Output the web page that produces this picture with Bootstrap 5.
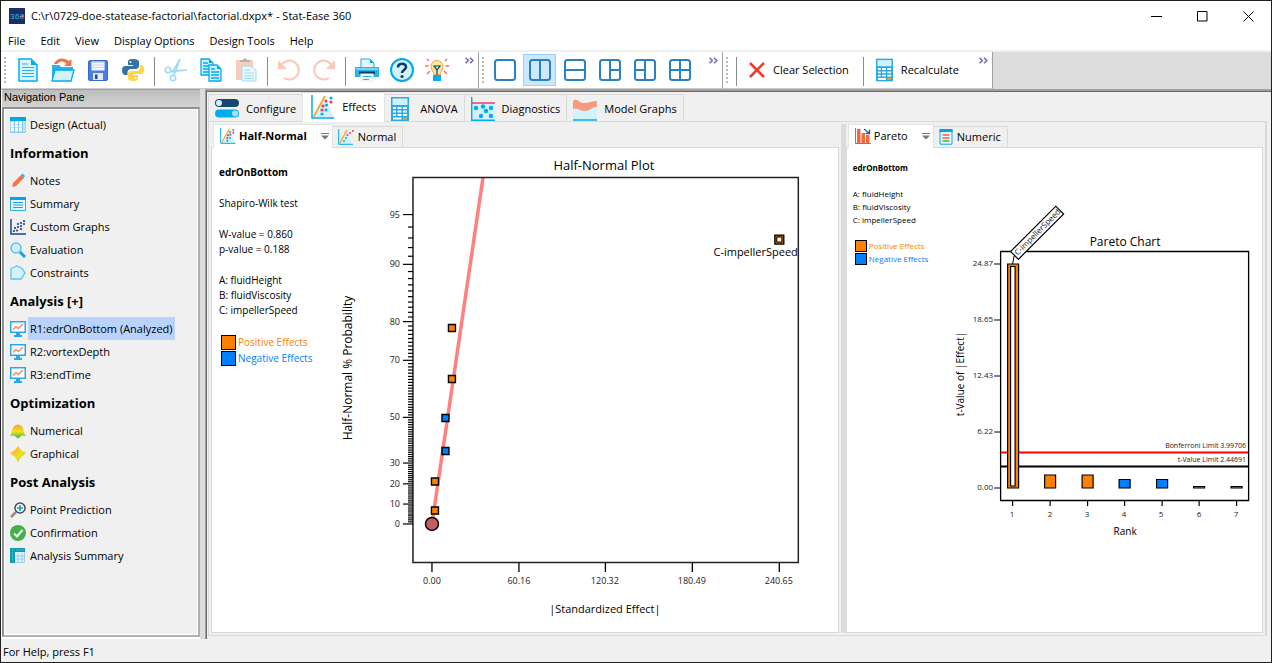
<!DOCTYPE html>
<html lang="en">
<head>
<meta charset="utf-8">
<meta name="viewport" content="width=device-width, initial-scale=1">
<title>Stat-Ease 360</title>
<link href="https://cdn.jsdelivr.net/npm/bootstrap@5.3.0/dist/css/bootstrap.min.css" rel="stylesheet">
<style>
:root{--face:#f0f0f0;--edge:#d9d9d9;--ink:#000}
body{font:11px/16px "Open Sans","Noto Sans",sans-serif;color:var(--ink);background:#fff}
button{font:inherit;color:inherit;background:none;border:0;padding:0}
svg{display:block;flex:none}
.app{height:100vh;border:1px solid #202020}
.titlebar{height:30px;padding-left:8px}
.doc{padding-left:6px}
.winbtn{width:46px;height:30px;display:grid;place-items:center}
.menubar{height:19px;border-bottom:2px solid var(--face);box-sizing:content-box}
.menubar button{padding:0 8px 0 7px;height:19px}
.bars{height:37px;background:#dcdcdc}
.bar{background:#fff;border-right:1px solid #a0a0a0;border-bottom:1px solid #ccc}
.filebar{width:478px}
.viewbar{width:244px}
.runbar{width:270px}
.grip{width:2px;margin:5px 3px 3px 3px;background:repeating-linear-gradient(#bbb 0 2px,#fff 2px 4px)}
.filebar .grip,.runbar .grip{margin-right:4px}
.sep{width:8px;padding:5px 3px 3px 4px}
.sep::before{content:"";width:1px;height:29px;display:block;background:#8c8c8c}
.tool{width:35px;display:grid;place-items:center}
.tool.picked{background:#cce8ff;box-shadow:inset 0 0 0 1px #99d1ff;margin:2px 1px;width:33px;height:32px}
.cmd{display:flex;align-items:center;gap:8px;padding:0 10px 0 9px}
.off{opacity:.45}
.chev{padding:5px 0 0;align-self:flex-start}
.navpane{width:199px;flex:none;padding-left:1px}
.navhead{font:11px/14px "Liberation Sans",Arial,sans-serif;height:18px;padding:0 2px;background:linear-gradient(#bdbdbd,#d4d4d4);border-top:1px solid #a0a0a0}
.navbox{border:2px solid #909090;border-right-color:#b0b0b0;border-bottom-color:#b0b0b0;outline:1px solid #fff;outline-offset:-3px;background:var(--face);padding:4px 0 0 6px;margin-bottom:2px;overflow:hidden}
.navbox h2{font-size:13px;font-weight:700;line-height:31px;padding-top:2px;margin:0}
.navbox a{display:flex;align-items:center;height:23px;color:#000;text-decoration:none}
.navbox a span{padding:0 2px;line-height:23px;margin-left:2px}
.navbox a.on span{background:#b9d3fd}
.split{width:5px;flex:none;background:#dcdcdc}
.work{background:var(--face);border-left:1px solid #a0a0a0;border-top:2px solid #a0a0a0;box-shadow:inset 1px 1px #696969;padding:1px 4px 3px 2px;min-width:0}
.tabs{display:flex;align-items:flex-end;position:relative;z-index:1}
.tab{display:flex;align-items:center;border:1px solid var(--edge);border-bottom:0;background:var(--face);margin-right:-1px;white-space:nowrap}
.tab.on{background:#fff;border-color:#e4e4e4;margin-bottom:-1px;z-index:2}
.maintabs{height:29px}
.maintabs .tab{height:27px;padding:1px 6px 0;gap:7px}
.maintabs .tab.on{height:30px;padding:0 8px 2px}
.subtabs{height:23px;padding-left:2px}
.subtabs .tab{height:21px;padding:0 6px 0 5px;gap:4px}
.subtabs .tab.on{height:24px;padding:0 3px 1px 6px;gap:3px}
.subtabs .tab.on svg:last-child{margin-left:11px}
.pageborder{border:1px solid var(--edge);border-right-width:2px;padding:2px}
.gutter{margin-left:2px}
.leftpane{flex:629 1 0;min-width:0}
.rightpane{flex:418 1 0;min-width:0}
.fill{min-height:0}
.plotpage{border:1px solid var(--edge);background:#fff}
.key{padding:17px 0 0 7px;flex:none;font-size:10px;line-height:15px}
.key p{margin:0 0 16px}
.key .sw{display:flex;align-items:center;height:16px;gap:2px;white-space:nowrap}
.key .sw::before{content:"";width:15px;height:15px;border:1px solid #000;margin-left:2px}
.key .pos{color:#ff8000}.key .neg{color:#0080ff}
.key .pos::before{background:#ff8000}.key .neg::before{background:#0080ff}
.wide{width:120px}
.slim{width:90px;padding:13px 0 0 6px;font-size:8px;line-height:13px}
.slim p{margin-bottom:13px}
.slim .sw{height:13px}
.slim .sw::before{width:12px;height:12px}
.plot{flex:1 1 0;min-width:0;height:100%}
.plot text{font-family:"Open Sans","Noto Sans",sans-serif}
.t7{font-size:7px;fill:#222}.t8{font-size:8px;fill:#222}.t9{font-size:9px;fill:#222}
.t10{font-size:10px}.t11{font-size:11px}.t12{font-size:12px}.t13{font-size:13px}
.statusbar{height:23px;background:var(--face);padding:5px 2px 2px}
</style>
</head>
<body>
<svg width="0" height="0" class="position-absolute" aria-hidden="true">
<symbol id="monitor" viewBox="0 0 16 16"><path d="M0 0h16v12H0z" fill="#29abe2"/><path d="M1.500 1.500h13v9h-13z" fill="#fff"/><path d="M3 8.500 6 5.500 8.500 7.500 13 3" fill="none" stroke="#f68b6b" stroke-width="1.500"/><path d="M6 12h4v2h2v2H4v-2h2z" fill="#29abe2"/></symbol>
<symbol id="chevrons" viewBox="0 0 8 6"><path d="M.5.5 3 3 .5 5.500M4.500.5 7 3 4.500 5.500" fill="none" stroke="#6c6ca8" stroke-width="1.300"/></symbol>
<symbol id="calc" viewBox="0 0 18 24"><path d="M0 0h18v24H0z" fill="#29abe2"/><path d="M1.500 1.500h15V8h-15z" fill="#d3f2fc"/><path d="M2 10h3v2H2zm4.500 0h4v2h-4zM12 10h4v2h-4zM2 13.500h3v2H2zm4.500 0h4v2h-4zm5.500 0h4v2h-4zM2 17h3v2H2zm4.500 0h4v2h-4zm5.500 0h4v2h-4zM2 20.500h8.500v2H2z" fill="#fff"/><path d="M12 20.500h4v2h-4z" fill="#f9a11b"/></symbol>
<symbol id="effects" viewBox="0 0 24 24"><path d="M1 23 14 1l9 22z" fill="#d3f2fc"/><path d="M1 0v23h22" fill="none" stroke="#00aeef" stroke-width="1.500"/><path d="M2.500 22 14 1" stroke="#f9a62b" stroke-width="1.800"/><g fill="#ef4056"><circle cx="20" cy="7" r="1.600"/><circle cx="15" cy="6" r="1.500"/><circle cx="12" cy="11" r="1.600"/><circle cx="11" cy="15" r="1.600"/></g><g fill="#00aeef"><circle cx="20" cy="3" r="1.600"/><circle cx="15.500" cy="10" r="1.600"/><circle cx="11" cy="19" r="1.600"/><circle cx="15" cy="15" r="1.500"/></g></symbol>
<symbol id="drop" viewBox="0 0 8 7"><path d="M0 .5h8" stroke="#777"/><path d="M0 2.500h8L4 6.500z" fill="#777"/></symbol>
</svg>
<div class="app d-flex flex-column">
  <header>
    <div class="titlebar d-flex align-items-center">
      <svg width="16" height="16" viewBox="0 0 16 16"><path d="M0 0h16v16H0z" fill="#1c2f63"/><text x="1" y="11" font-size="8" font-family="Liberation Mono" fill="#29b6f6">360</text><path d="M11 9l4-1-2-1" stroke="#f47b30" fill="none"/></svg>
      <span class="doc flex-grow-1">C:\r\0729-doe-statease-factorial\factorial.dxpx* - Stat-Ease 360</span>
      <button class="winbtn" aria-label="Minimize"><svg width="11" height="11"><path d="M0 5.500h11" stroke="#000"/></svg></button>
      <button class="winbtn" aria-label="Maximize"><svg width="11" height="11"><path d="M.5.500h9.500v9.500H.5z" fill="none" stroke="#000"/></svg></button>
      <button class="winbtn" aria-label="Close"><svg width="11" height="11"><path d="M.5.500l10 10M10.500.5l-10 10" stroke="#000"/></svg></button>
    </div>
    <nav class="menubar d-flex"><button>File</button><button>Edit</button><button>View</button><button>Display Options</button><button>Design Tools</button><button>Help</button></nav>
    <div class="bars d-flex">
      <div class="bar filebar d-flex">
        <span class="grip"></span>
        <button class="tool" aria-label="New"><svg width="20" height="24" viewBox="0 0 20 24"><path d="M1 1h12l6 6v16H1z" fill="#d9f4fd" stroke="#00aeef" stroke-width="1.500"/><path d="M13 1v6h6z" fill="#00aeef"/><path d="M4 6h6M4 9.500h12M4 12.500h12M4 15.500h12M4 18.500h12" stroke="#29b3e8"/></svg></button>
        <button class="tool" aria-label="Open"><svg width="24" height="24" viewBox="0 0 24 24"><path d="M1 22V7h7l2 2h12v5" fill="#29b3e8"/><path d="M3 6C5 0 13-1.500 18 3l2.500-2v7h-7.500l2.500-2.300C12 2.500 8 3 6.500 6z" fill="#f4744a"/><path d="M1 23 4 12h19l-3 11z" fill="#d3f2fc" stroke="#00aeef" stroke-width="1.300"/></svg></button>
        <button class="tool" aria-label="Save"><svg width="20" height="21" viewBox="0 0 20 21"><rect x=".5" y=".5" width="19" height="20" rx="1.500" fill="#4a7fe0" stroke="#3768c8"/><path d="M3.500 1.500h13v9h-13z" fill="#f2f5fb"/><path d="M3.500 2.500h13M3.500 5h13M3.500 7.500h13" stroke="#cdd8ee"/><path d="M5 13h10v7H5z" fill="#e4e8f0"/><path d="M7 14.500h2.500v4.500H7z" fill="#24489c"/></svg></button>
        <button class="tool" aria-label="Python"><svg width="24" height="24" viewBox="0 0 24 24"><path d="M11.800 1C7 1 7 3 7 4v3h5v1H4.500C2 8 1 10 1 12.500S2.500 17 4 17h2.500v-2.500C6.500 12.500 8 11 10 11h5c1.500 0 3-1.200 3-3V4c0-2-2-3-6.200-3z" fill="#3673a5"/><circle cx="9.500" cy="4" r="1" fill="#fff"/><path d="M12.200 23c4.800 0 4.800-2 4.800-3v-3h-5v-1h7.500c2.500 0 3.500-2 3.500-4.500S21.500 7 20 7h-1v3c0 2-1.500 3-3.500 3H10c-1.700 0-3 1.200-3 3v4c0 2 1.500 3 5.200 3z" fill="#ffd445"/><circle cx="14.500" cy="20" r="1" fill="#fff"/></svg></button>
        <span class="sep"></span>
        <button class="tool off" aria-label="Cut" disabled><svg width="24" height="24" viewBox="0 0 24 24"><g fill="none" stroke="#29b3e8" stroke-width="1.600"><circle cx="4" cy="12" r="2.700"/><circle cx="9" cy="20" r="2.700"/><path d="M6.500 13l16.500-1-13.500 1.500M10 17.500 16 1 8 15"/></g></svg></button>
        <button class="tool" aria-label="Copy"><svg width="22" height="24" viewBox="0 0 22 24"><g stroke="#00aeef" stroke-width="1.300"><path d="M1 1h8l4 4v12H1z" fill="#d3f2fc"/><path d="M3 5h5M3 8h8M3 11h8M3 14h8"/><path d="M9 7h8l4 4v12H9z" fill="#d3f2fc"/><path d="M11 11h4M11 14h8M11 17h8M11 20h8"/></g><path d="M9 1v4h4zM17 7v4h4z" fill="#00aeef"/></svg></button>
        <button class="tool off" aria-label="Paste" disabled><svg width="22" height="24" viewBox="0 0 22 24"><path d="M1 2h17v20H1z" fill="#f0916e"/><path d="M5 4V2h3c0-2 4-2 4 0h3v2z" fill="#555"/><path d="M7 8h9l5 4v11H7z" fill="#d3f2fc" stroke="#29b3e8"/><path d="M9 12h6M9 15h10M9 18h10M9 20.500h10" stroke="#29b3e8"/></svg></button>
        <span class="sep"></span>
        <button class="tool off" aria-label="Undo" disabled><svg width="22" height="22" viewBox="0 0 22 22"><path d="M4 5A9.500 9.500 0 1 1 6 19" fill="none" stroke="#f58466" stroke-width="2"/><path d="M0 1v9h9z" fill="#f58466"/></svg></button>
        <button class="tool off" aria-label="Redo" disabled><svg width="22" height="22" viewBox="0 0 22 22"><path d="M18 5A9.500 9.500 0 1 0 16 19" fill="none" stroke="#f58466" stroke-width="2"/><path d="M22 1v9h-9z" fill="#f58466"/></svg></button>
        <span class="sep"></span>
        <button class="tool" aria-label="Print"><svg width="24" height="24" viewBox="0 0 24 24"><path d="M6 11V1h9l4 4v6z" fill="#e8f8fe" stroke="#00aeef"/><path d="M15 1v4h4z" fill="#00aeef"/><path d="M0 9h24v10H0z" fill="#29b3e8"/><path d="M1 10h22v2H1z" fill="#7ad4f5"/><path d="M4 13.500h16v2.500H4z" fill="#0d3c66"/><path d="M5.500 15.500h13V24h-13z" fill="#e8f8fe"/><path d="M8 18.500h8M8 21.500h6" stroke="#29b3e8"/></svg></button>
        <button class="tool" aria-label="Help"><svg width="24" height="24" viewBox="0 0 24 24"><circle cx="12" cy="12" r="11" fill="#d3f2fc" stroke="#00a6e8" stroke-width="2"/><path d="M8 9.500c0-5 8-5 8-.5 0 3-4 3-4 6" fill="none" stroke="#0d3c66" stroke-width="2.600"/><circle cx="12" cy="18.500" r="1.600" fill="#0d3c66"/></svg></button>
        <button class="tool" aria-label="Tips"><svg width="24" height="24" viewBox="0 0 24 24"><path d="M9 17c0-4-3-4-3-8.500a6 6 0 0 1 12 0c0 4.500-3 4.500-3 8.500z" fill="#fdeb9a" stroke="#f4a04a"/><path d="M12 17v-5l-3-4h6l-3 4" fill="none" stroke="#0d3c66" stroke-width="1.200"/><path d="M8 17h8v6H8z" fill="#00aeef"/><path d="M4 3 2 1M20 3l2-2M3.500 8H0M24 8h-3.500M5 13l-3 3M19 13l3 3" stroke="#f4744a" stroke-width="1.400"/></svg></button>
        <span class="flex-grow-1"></span><button class="chev me-1" aria-label="More"><svg width="9" height="7"><use href="#chevrons"/></svg></button>
      </div>
      <div class="bar viewbar d-flex">
        <span class="grip"></span>
        <button class="tool" aria-label="Single"><svg width="22" height="22" viewBox="0 0 22 22" fill="none" stroke="#2a82c0" stroke-width="2"><rect x="1" y="1" width="20" height="20" rx="2.500"/></svg></button>
        <button class="tool picked" aria-label="Two columns"><svg width="22" height="22" viewBox="0 0 22 22" fill="none" stroke="#2a82c0" stroke-width="2"><rect x="1" y="1" width="20" height="20" rx="2.500"/><path d="M11 1v20"/></svg></button>
        <button class="tool" aria-label="Two rows"><svg width="22" height="22" viewBox="0 0 22 22" fill="none" stroke="#2a82c0" stroke-width="2"><rect x="1" y="1" width="20" height="20" rx="2.500"/><path d="M1 11h20"/></svg></button>
        <button class="tool" aria-label="One and two"><svg width="22" height="22" viewBox="0 0 22 22" fill="none" stroke="#2a82c0" stroke-width="2"><rect x="1" y="1" width="20" height="20" rx="2.500"/><path d="M11 1v20M11 11h10"/></svg></button>
        <button class="tool" aria-label="Two and one"><svg width="22" height="22" viewBox="0 0 22 22" fill="none" stroke="#2a82c0" stroke-width="2"><rect x="1" y="1" width="20" height="20" rx="2.500"/><path d="M11 1v20M1 11h10"/></svg></button>
        <button class="tool" aria-label="Four"><svg width="22" height="22" viewBox="0 0 22 22" fill="none" stroke="#2a82c0" stroke-width="2"><rect x="1" y="1" width="20" height="20" rx="2.500"/><path d="M11 1v20M1 11h20"/></svg></button>
        <span class="flex-grow-1"></span><button class="chev me-1" aria-label="More"><svg width="9" height="7"><use href="#chevrons"/></svg></button>
      </div>
      <div class="bar runbar d-flex">
        <span class="grip"></span><span class="sep"></span>
        <button class="cmd"><svg width="16" height="16" viewBox="0 0 16 16"><path d="M1 1l14 14M15 1 1 15" stroke="#f23b2f" stroke-width="2.600"/></svg><span>Clear Selection</span></button>
        <span class="sep"></span>
        <button class="cmd"><svg width="17" height="24"><use href="#calc"/></svg><span>Recalculate</span></button>
        <span class="flex-grow-1"></span><button class="chev me-1" aria-label="More"><svg width="9" height="7"><use href="#chevrons"/></svg></button>
      </div>
    </div>
  </header>
  <main class="d-flex flex-grow-1 bg-white fill">
    <aside class="navpane d-flex flex-column">
      <div class="navhead">Navigation Pane</div>
      <nav class="navbox flex-grow-1">
        <a href="#"><svg width="16" height="16" viewBox="0 0 16 16"><path d="M0 0h16v15H0z" fill="#bfe8fa"/><path d="M0 0h16v4H0z" fill="#00a6e8"/><path d="M1 5h3v2H1zm4 0h3v2H5zm4 0h3v2H9zM1 8h3v2H1zm4 0h3v2H5zm4 0h3v2H9zm-8 3h3v3H1zm4 0h3v3H5zm4 0h3v3H9z" fill="#fff"/><path d="M0 4v11.500h16V4M4.500 4v11M8.500 4v11M12.500 4v11" fill="none" stroke="#5cbfe9" stroke-width=".7"/></svg><span>Design (Actual)</span></a>
        <h2>Information</h2>
        <a href="#"><svg width="16" height="16" viewBox="0 0 16 16"><path d="M2 14l1-4 8-8 3 3-8 8z" fill="#f4744a"/><path d="M11 2l1.500-1.500L15 3l-1.500 2z" fill="#29b3e8"/></svg><span>Notes</span></a>
        <a href="#"><svg width="16" height="14" viewBox="0 0 16 14"><path d="M.5.500h15v13H.5z" fill="#e8f8fe" stroke="#29b3e8"/><path d="M0 0h16v3H0z" fill="#00a6e8"/><path d="M3 5.500h10M3 8h10M3 10.500h10" stroke="#29a0dc"/></svg><span>Summary</span></a>
        <a href="#"><svg width="16" height="16" viewBox="0 0 16 16"><path d="M1 0v15h15" fill="none" stroke="#1c3f94" stroke-width="1.500"/><g fill="#1c3f94"><circle cx="4" cy="12" r="1.100"/><circle cx="7" cy="11.500" r="1.100"/><circle cx="5" cy="9" r="1.100"/><circle cx="8" cy="8" r="1.100"/><circle cx="8" cy="5" r="1.100"/><circle cx="11" cy="7" r="1.100"/><circle cx="11" cy="10" r="1.100"/><circle cx="11" cy="4" r="1.100"/><circle cx="14" cy="2" r="1.100"/><circle cx="14" cy="5" r="1.100"/></g></svg><span>Custom Graphs</span></a>
        <a href="#"><svg width="16" height="16" viewBox="0 0 16 16"><circle cx="6" cy="6" r="5" fill="#cdeffc" stroke="#5cc5ee" stroke-width="1.500"/><path d="M10 10l5 5" stroke="#1d9ee0" stroke-width="3"/></svg><span>Evaluation</span></a>
        <a href="#"><svg width="16" height="16" viewBox="0 0 16 16"><path d="M1 3.500 7 1l5 2.500L15 8l-4 6H1z" fill="#d3f2fc" stroke="#5cc5ee" stroke-width="1.300"/></svg><span>Constraints</span></a>
        <h2>Analysis [+]</h2>
        <a href="#" class="on"><svg width="16" height="16"><use href="#monitor"/></svg><span>R1:edrOnBottom (Analyzed)</span></a>
        <a href="#"><svg width="16" height="16"><use href="#monitor"/></svg><span>R2:vortexDepth</span></a>
        <a href="#"><svg width="16" height="16"><use href="#monitor"/></svg><span>R3:endTime</span></a>
        <h2>Optimization</h2>
        <a href="#"><svg width="16" height="16" viewBox="0 0 16 16"><defs><linearGradient id="hill" x2="0" y2="1"><stop stop-color="#f9a13a"/><stop offset=".5" stop-color="#f7e017"/><stop offset="1" stop-color="#3fae49"/></linearGradient></defs><path d="M0 13C3 11 1 1.500 8 1.500s5 9.500 8 11.500l-4-.5L8 15.500l-4-3z" fill="url(#hill)"/></svg><span>Numerical</span></a>
        <a href="#"><svg width="16" height="16" viewBox="0 0 16 16"><defs><linearGradient id="tile" x2="1" y2="1"><stop offset=".3" stop-color="#fbc02d"/><stop offset=".6" stop-color="#f2e11a"/><stop offset="1" stop-color="#7cb342"/></linearGradient></defs><path d="M8 0l3 4 5 3-5 4-3 5-3-5-5-4 5-3z" fill="url(#tile)"/></svg><span>Graphical</span></a>
        <h2>Post Analysis</h2>
        <a href="#"><svg width="16" height="16" viewBox="0 0 16 16"><path d="M1 15l5-5" stroke="#a1887f" stroke-width="2.500"/><circle cx="10" cy="6" r="5" fill="#eef6fb" stroke="#3e4a73" stroke-width="1.500"/><path d="M10 3v6M7 6h6" stroke="#1aa88a" stroke-width="1.600"/></svg><span>Point Prediction</span></a>
        <a href="#"><svg width="16" height="16" viewBox="0 0 16 16"><circle cx="8" cy="8" r="8" fill="#43b04a"/><path d="M4 8.500 7 11.500 12.500 5" fill="none" stroke="#fff" stroke-width="2"/></svg><span>Confirmation</span></a>
        <a href="#"><svg width="16" height="16" viewBox="0 0 16 16"><path d="M.5.500h14v14H.5z" fill="#e3f4fb" stroke="#9fd0ea"/><path d="M5 8h10M5 11h10M8 5v10M12 5v10" stroke="#9fc8ea"/><path d="M0 0h15v4H5v11H0z" fill="#1299b8"/><path d="M2.500 1v13M6 2h8" stroke="#2ec5d6" stroke-dasharray="2 1"/></svg><span>Analysis Summary</span></a>
      </nav>
    </aside>
    <div class="split"></div>
    <section class="work d-flex flex-column flex-grow-1">
      <div class="tabs maintabs" role="tablist">
        <button class="tab" role="tab"><svg width="24" height="19" viewBox="0 0 24 19"><rect width="24" height="8" y="0" rx="4" fill="#17466e"/><circle cx="4" cy="4" r="3" fill="#d3f2fc"/><rect width="24" height="8" y="10.500" rx="4" fill="#00aeef"/><circle cx="20" cy="14.500" r="3" fill="#a5e4fb"/></svg>Configure</button>
        <button class="tab on" role="tab" aria-selected="true"><svg width="24" height="24"><use href="#effects"/></svg>Effects</button>
        <button class="tab" role="tab"><svg width="18" height="24"><use href="#calc"/></svg><span class="ms-1">ANOVA</span></button>
        <button class="tab" role="tab"><svg width="24" height="24" viewBox="0 0 24 24"><path d="M1 5h23v18H1z" fill="#d3f2fc"/><path d="M.7 0v23.300H24" fill="none" stroke="#00aeef" stroke-width="1.500"/><path d="M1 6h23" stroke="#ef4056" stroke-width="1.500"/><g fill="#00aeef"><circle cx="5" cy="11" r="2.200"/><circle cx="12" cy="9.500" r="2.200"/><circle cx="20" cy="11" r="2.200"/><circle cx="15" cy="14" r="2.200"/><circle cx="10" cy="19" r="2.200"/><circle cx="20" cy="19" r="2.200"/></g></svg>Diagnostics</button>
        <button class="tab" role="tab"><svg width="24" height="24" viewBox="0 0 24 24"><path d="M0 10h24v13H0z" fill="#d3f2fc"/><path d="M0 23h24" stroke="#00aeef" stroke-width="1.500"/><path d="M0 4c4-4 6 2 11 2s8-2 13-2v6c-4-1-6 4-12 4-5 0-8-4-12-2z" fill="#f69a7c"/></svg>Model Graphs</button>
      </div>
      <div class="pageborder d-flex flex-grow-1 fill">
        <div class="leftpane d-flex flex-column">
          <div class="tabs subtabs" role="tablist">
            <button class="tab on" role="tab" aria-selected="true"><svg width="16" height="16"><use href="#effects"/></svg><b>Half-Normal</b><svg width="8" height="7"><use href="#drop"/></svg></button>
            <button class="tab" role="tab"><svg width="16" height="16" viewBox="0 0 16 16"><path d="M1 15 10 2l4 13z" fill="#d3f2fc"/><path d="M.7 0v15.300H15" fill="none" stroke="#00aeef"/><path d="M1.500 14.500 9 1" stroke="#f9a62b" stroke-width="1.500"/><g fill="#ef4056"><circle cx="15" cy="2" r="1"/><circle cx="12" cy="4" r="1"/><circle cx="9.500" cy="6" r="1"/></g><g fill="#00aeef"><circle cx="8" cy="9" r="1"/><circle cx="6" cy="12" r="1"/></g></svg>Normal</button>
          </div>
          <div class="plotpage d-flex flex-grow-1 fill">
            <div class="key wide">
              <p><b>edrOnBottom</b></p><p>Shapiro-Wilk test</p><p>W-value = 0.860<br>p-value = 0.188</p>
              <p>A: fluidHeight<br>B: fluidViscosity<br>C: impellerSpeed</p>
              <div class="sw pos">Positive Effects</div><div class="sw neg">Negative Effects</div>
            </div>
            <svg class="plot" viewBox="332 148 506 484" role="img" aria-label="Half-Normal Plot">
              <text class="t13" x="604" y="170" text-anchor="middle">Half-Normal Plot</text>
              <path d="M432 524 483 178" stroke="#ff8080" stroke-width="3.500"/>
              <path d="M413 177.500h385.500v385H413z" fill="none" stroke="#222" stroke-width="1.500"/>
              <g id="probTicks" stroke="#000" stroke-width="1.200"></g>
              <g id="probLabels" class="t9" text-anchor="end"></g>
              <path d="M432 563v9M519 563v9M605.500 563v9M692.500 563v9M779.500 563v9" stroke="#000" stroke-width="1.300"/>
              <g class="t9" text-anchor="middle"><text x="432" y="584">0.00</text><text x="519" y="584">60.16</text><text x="605" y="584">120.32</text><text x="692" y="584">180.49</text><text x="779" y="584">240.65</text></g>
              <text class="t11" x="605" y="613" text-anchor="middle">|Standardized Effect|</text>
              <text class="t12" transform="translate(352 368) rotate(-90)" text-anchor="middle">Half-Normal % Probability</text>
              <g stroke="#000" stroke-width="1.400" fill="#ff8000"><path d="M448.500 324.500h7v7h-7zM448.500 375.500h7v7h-7zM431.500 478h7v7h-7zM431.500 507h7v7h-7z"/><path fill="#0080ff" d="M442 414.500h7v7h-7zM442 447.500h7v7h-7z"/><circle cx="432" cy="524" r="6.500" fill="#c06060"/></g>
              <path d="M775 235h9v9h-9z" fill="#c06000" stroke="#000" stroke-width="1.300"/><path d="M777 237h5v5h-5z" fill="#fff" stroke="#000"/>
              <text class="t11" x="798" y="256" text-anchor="end">C-impellerSpeed</text>
            </svg>
          </div>
        </div>
        <div class="split gutter"></div>
        <div class="rightpane d-flex flex-column">
          <div class="tabs subtabs" role="tablist">
            <button class="tab on" role="tab" aria-selected="true"><svg width="16" height="16" viewBox="0 0 16 16"><path d="M.5 0v15.500H16" fill="none" stroke="#00aeef"/><path d="M2 1h3.500v14H2zM6.500 5h3.500v10H6.500zM11 7h3.500v8H11z" fill="#f4693c"/><path d="M9 1l5 4M14.500 1.500V5.500H10.500" fill="none" stroke="#2c5f86" stroke-width="1.300"/></svg>Pareto<svg width="8" height="7"><use href="#drop"/></svg></button>
            <button class="tab" role="tab"><svg width="14" height="16" viewBox="0 0 14 16"><path d="M1 .7h12v14.500H1z" fill="#e8f8fe" stroke="#00aeef"/><path d="M.5 0h13v3H.5z" fill="#00a6e8"/><path d="M3.500 6h7M3.500 9h7" stroke="#f4574a" stroke-width="1.500"/><path d="M3.500 12h7" stroke="#2bbf3a" stroke-width="1.500"/></svg>Numeric</button>
          </div>
          <div class="plotpage d-flex flex-grow-1 fill">
            <div class="key slim">
              <p><b>edrOnBottom</b></p><p>A: fluidHeight<br>B: fluidViscosity<br>C: impellerSpeed</p>
              <div class="sw pos">Positive Effects</div><div class="sw neg">Negative Effects</div>
            </div>
            <svg class="plot" viewBox="937 148 325 484" role="img" aria-label="Pareto Chart">
              <text class="t12" x="1125" y="246" text-anchor="middle">Pareto Chart</text>
              <path d="M1000.500 251.500h248v249h-248z" fill="none" stroke="#000" stroke-width="1.300"/>
              <path d="M994 264h6M994 320h6M994 376h6M994 432h6M994 488h6M1012.500 501v5M1050 501v5M1087.500 501v5M1124.500 501v5M1162 501v5M1199 501v5M1236.500 501v5" stroke="#000" stroke-width="1.200"/>
              <g class="t8" text-anchor="end"><text x="993" y="266">24.87</text><text x="993" y="322">18.65</text><text x="993" y="378">12.43</text><text x="993" y="434">6.22</text><text x="993" y="490">0.00</text></g>
              <g class="t8" text-anchor="middle"><text x="1012" y="517">1</text><text x="1050" y="517">2</text><text x="1087" y="517">3</text><text x="1124" y="517">4</text><text x="1161" y="517">5</text><text x="1199" y="517">6</text><text x="1236" y="517">7</text></g>
              <text class="t10" x="1125" y="535" text-anchor="middle">Rank</text>
              <text class="t10" transform="translate(964 374) rotate(-90)" text-anchor="middle">t-Value of |Effect|</text>
              <path d="M1001 452.500h247" stroke="#f00" stroke-width="2.200"/><path d="M1001 466.500h247" stroke="#000" stroke-width="2.200"/>
              <g class="t7" text-anchor="end"><text x="1246" y="448">Bonferroni Limit 3.99706</text><text x="1246" y="462">t-Value Limit 2.44691</text></g>
              <g stroke="#000" stroke-width="1.200" fill="#ff8000"><path d="M1007.500 264h11v224h-11z"/><path d="M1010.500 266.500h4.500v219.500h-4.500z" fill="#fff"/><path d="M1044.500 475h11v13h-11zM1082 475h11v13h-11zM1193.500 486.500h11v1.500h-11zM1231 486.500h11v1.500h-11z"/><path fill="#0080ff" d="M1119 479.500h11v8.500h-11zM1156.500 479.500h11v8.500h-11z"/></g>
              <path d="M1012.500 264l1.500-8" stroke="#000"/>
              <g transform="translate(1010.500 251.500) rotate(-45)"><path d="M0 0h64v11H0z" fill="#fff" stroke="#000" stroke-width="1.200"/><text class="t8" x="2" y="8">C-impellerSpeed</text></g>
            </svg>
          </div>
        </div>
      </div>
    </section>
  </main>
  <footer class="statusbar">For Help, press F1</footer>
</div>
<script>
// Half-normal probability axis: one tick for each percent up to 95, long ones where labelled.
const Z0 = 524, UNIT = 157.9, LABELLED = [0, 10, 20, 30, 50, 70, 80, 90, 95];
function density(z) { return Math.exp(-z * z / 2) * Math.sqrt(2 / Math.PI); }
let z = 0, area = 0, ticks = '', labels = '';
for (let p = 0; p <= 95; p++) {
  while (area < p / 100) { area += density(z + 0.0005) * 0.001; z += 0.001; }
  const y = (Z0 - z * UNIT).toFixed(1), major = LABELLED.includes(p);
  ticks += `<path d="M${major ? 403 : 408} ${y}H413"/>`;
  if (major) labels += `<text x="400" y="${+y + 3}">${p}</text>`;
}
document.getElementById('probTicks').innerHTML = ticks;
document.getElementById('probLabels').innerHTML = labels;
</script>
<script src="https://cdn.jsdelivr.net/npm/bootstrap@5.3.0/dist/js/bootstrap.bundle.min.js"></script>
</body>
</html>
